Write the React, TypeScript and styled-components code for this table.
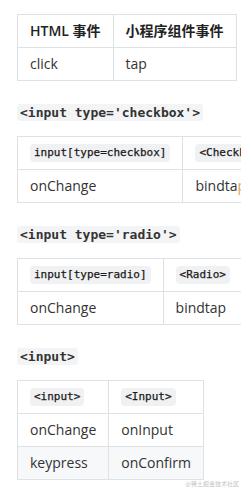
import React from 'react';
import styled, { createGlobalStyle } from 'styled-components';

const GlobalStyle = createGlobalStyle`
    body {
        margin: 0;
        background: #ffffff;
        font-family: 'Open Sans', 'Noto Sans', 'Noto Sans CJK SC', sans-serif;
        color: #333333;
    }
`;

const Page = styled.div`
    position: relative;
    width: 241px;
    height: 495px;
    overflow: hidden;
    padding: 14px 0 0 17px;
    box-sizing: border-box;
`;

const Heading = styled.h4`
    margin: 23px 0 15px;
    height: 17px;
    display: flex;
    align-items: center;
`;

const HeadingCode = styled.code`
    font-family: 'DejaVu Sans Mono', 'Liberation Mono', monospace;
    font-size: 13px;
    font-weight: 600;
    line-height: 17px;
    color: #333333;
    background: #f3f4f5;
    border-radius: 3px;
    padding: 0 3px;
    white-space: nowrap;
`;

const Table = styled.table`
    border-collapse: collapse;
    font-size: 14px;
    white-space: nowrap;
`;

const Th = styled.th`
    box-sizing: content-box;
    height: 20px;
    border: 1px solid #dfe2e5;
    padding: 6px 12px;
    line-height: 20px;
    text-align: left;
    font-weight: 600;
    color: #222222;
    background: #ffffff;
    vertical-align: middle;
`;

const Td = styled.td<{ $striped?: boolean }>`
    box-sizing: content-box;
    height: 20px;
    border: 1px solid #dfe2e5;
    padding: 6px 12px;
    line-height: 20px;
    color: #333333;
    vertical-align: middle;
    background: ${p => (p.$striped ? '#f6f8fa' : '#ffffff')};
`;

const CellCode = styled.code`
    display: inline-block;
    font-family: 'DejaVu Sans Mono', 'Liberation Mono', monospace;
    font-size: 11px;
    font-weight: 400;
    line-height: 18px;
    height: 18px;
    color: #1a1a1a;
    background: #f0f1f2;
    border-radius: 4px;
    padding: 0 4px;
    vertical-align: top;
    margin-top: 1px;
    -webkit-text-stroke: 0.25px #1a1a1a;
`;

const Fringe = styled.span`
    color: #e9a25a;
`;

const Watermark = styled.div`
    position: absolute;
    right: 2px;
    bottom: 7px;
    font-size: 6px;
    color: #c4c4c4;
    font-family: 'Noto Sans CJK SC', sans-serif;
`;

type Row = React.ReactNode[];

const DataTable = ({ head, rows }: { head: React.ReactNode[]; rows: Row[] }) => (
    <Table>
        <thead>
            <tr>
                {head.map((h, i) => (
                    <Th key={i}>{h}</Th>
                ))}
            </tr>
        </thead>
        <tbody>
            {rows.map((row, r) => (
                <tr key={r}>
                    {row.map((c, i) => (
                        <Td key={i} $striped={r % 2 === 1}>
                            {c}
                        </Td>
                    ))}
                </tr>
            ))}
        </tbody>
    </Table>
);

export default function App() {
    return (
        <Page>
            <GlobalStyle />
            <DataTable head={['HTML 事件', '小程序组件事件']} rows={[['click', 'tap']]} />

            <Heading>
                <HeadingCode>{"<input type='checkbox'>"}</HeadingCode>
            </Heading>
            <DataTable
                head={[<CellCode>input[type=checkbox]</CellCode>, <CellCode>{'<Checkbox>'}</CellCode>]}
                rows={[['onChange', <>bindta<Fringe>p</Fringe></>]]}
            />

            <Heading>
                <HeadingCode>{"<input type='radio'>"}</HeadingCode>
            </Heading>
            <DataTable
                head={[<CellCode>input[type=radio]</CellCode>, <CellCode>{'<Radio>'}</CellCode>]}
                rows={[['onChange', 'bindtap']]}
            />

            <Heading>
                <HeadingCode>{'<input>'}</HeadingCode>
            </Heading>
            <DataTable
                head={[<CellCode>{'<input>'}</CellCode>, <CellCode>{'<Input>'}</CellCode>]}
                rows={[
                    ['onChange', 'onInput'],
                    ['keypress', 'onConfirm']
                ]}
            />
            <Watermark>@稀土掘金技术社区</Watermark>
        </Page>
    );
}
